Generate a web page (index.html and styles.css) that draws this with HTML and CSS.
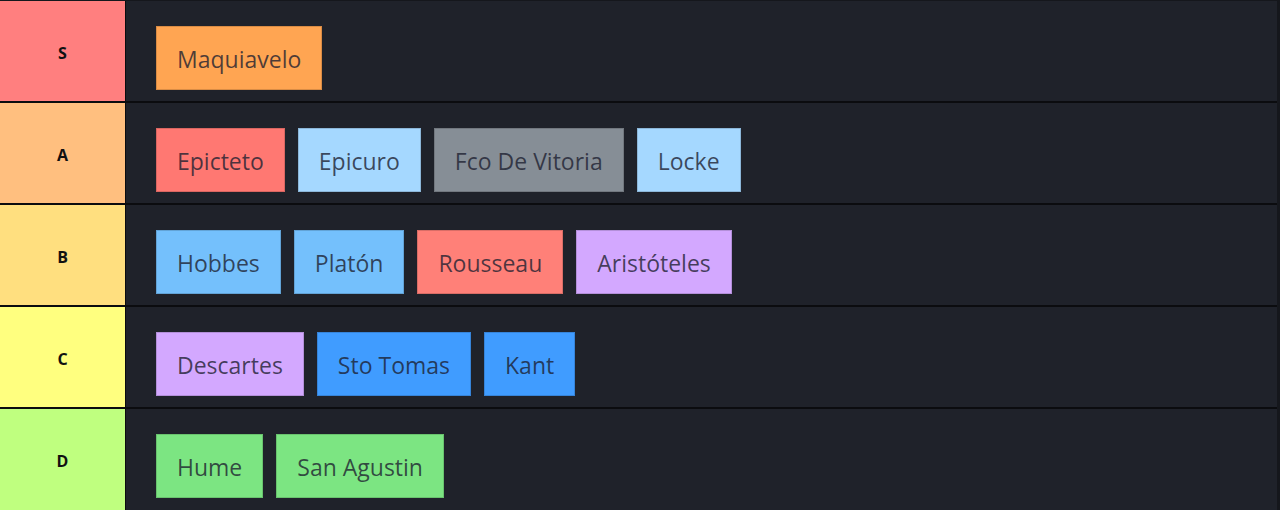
FILE: index.html
```html
<!DOCTYPE html>
<html>
<head>
<meta charset="utf-8">
<link rel="stylesheet" href="styles.css">
</head>
<body>
<div class="tierlist">
  <div class="row">
    <div class="label s">S</div>
    <div class="items">
      <div class="chip orange">Maquiavelo</div>
    </div>
  </div>
  <div class="row">
    <div class="label a">A</div>
    <div class="items">
      <div class="chip red">Epicteto</div>
      <div class="chip lightblue">Epicuro</div>
      <div class="chip gray">Fco De Vitoria</div>
      <div class="chip lightblue">Locke</div>
    </div>
  </div>
  <div class="row">
    <div class="label b">B</div>
    <div class="items">
      <div class="chip blue">Hobbes</div>
      <div class="chip blue">Platón</div>
      <div class="chip salmon">Rousseau</div>
      <div class="chip purple">Aristóteles</div>
    </div>
  </div>
  <div class="row">
    <div class="label c">C</div>
    <div class="items">
      <div class="chip purple">Descartes</div>
      <div class="chip strongblue">Sto Tomas</div>
      <div class="chip strongblue">Kant</div>
    </div>
  </div>
  <div class="row">
    <div class="label d">D</div>
    <div class="items">
      <div class="chip green">Hume</div>
      <div class="chip green">San Agustin</div>
    </div>
  </div>
</div>
</body>
</html>
```
FILE: styles.css
```css
html, body {
  margin: 0;
  padding: 0;
  background: #111318;
}
body {
  width: 1280px;
  height: 510px;
  overflow: hidden;
  font-family: "Open Sans", "Noto Sans", sans-serif;
}
.tierlist {
  display: flex;
  flex-direction: column;
  gap: 2px;
  background: #0b0c0f;
  border-top: 1px solid #15171c;
  border-right: 3px solid #15171c;
  height: 509px;
}
.row {
  display: flex;
  height: 100px;
  gap: 1px;
}
.row:last-child {
  flex: 1;
}
.label {
  width: 125px;
  flex: none;
  display: flex;
  align-items: center;
  justify-content: center;
  padding-top: 3px;
  box-sizing: border-box;
  font-family: "Open Sans", "Liberation Sans", sans-serif;
  font-weight: 700;
  font-size: 16px;
  color: #111;
}
.label.s { background: #ff7f7f; }
.label.a { background: #ffbf7f; }
.label.b { background: #ffdf7f; }
.label.c { background: #ffff7f; }
.label.d { background: #bfff7f; }
.items {
  flex: 1;
  background: #1f222a;
  display: flex;
  align-items: flex-start;
  gap: 13px;
  padding: 25px 0 0 30px;
}
.chip {
  height: 64px;
  box-sizing: border-box;
  padding: 2px 20px 0;
  display: flex;
  align-items: center;
  font-size: 23px;
  color: rgba(28, 32, 48, 0.78);
  border: 1px solid rgba(0, 0, 0, 0.15);
}
.orange { background: #ffa552; }
.red { background: #ff7872; }
.lightblue { background: #a5d8ff; }
.gray { background: #868e96; }
.blue { background: #74c0fc; }
.salmon { background: #ff8078; }
.purple { background: #d3a8ff; }
.strongblue { background: #409cff; }
.green { background: #7ce582; }
```
